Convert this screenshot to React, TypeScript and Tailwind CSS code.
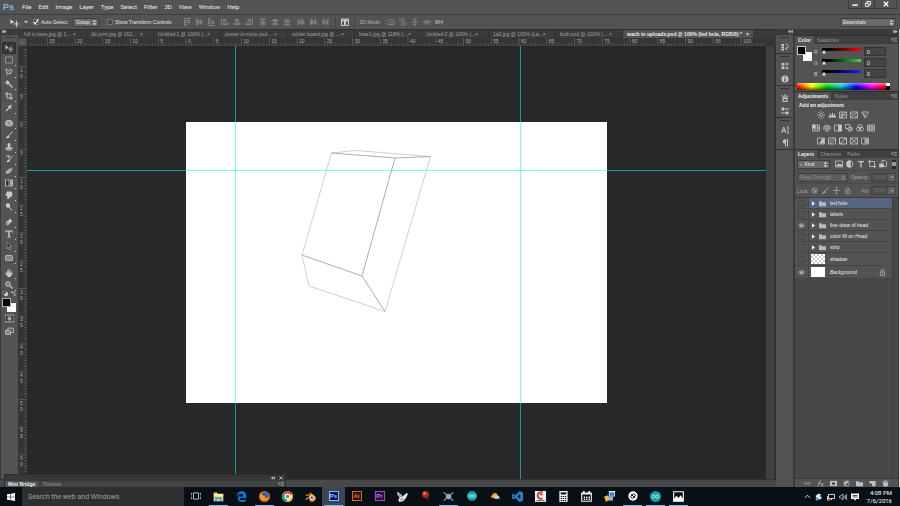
import type { ReactNode } from 'react';
import clsx from 'clsx';

type IconProps = { children: ReactNode; className?: string };

// All icons share a 16 unit grid and take their colour from the text
function Icon({ children, className = 'size-2' }: IconProps) {
  return (
    <svg viewBox="0 0 16 16" className={clsx('shrink-0', className)} fill="none" stroke="currentColor" strokeWidth="1.6" aria-hidden="true">
      {children}
    </svg>
  );
}

const MENU = ['File', 'Edit', 'Image', 'Layer', 'Type', 'Select', 'Filter', '3D', 'View', 'Window', 'Help'];

const DOCUMENTS = [
  'full in boss.jpg @ 1...',
  '3d print.jpg @ 162...',
  'Untitled-1 @ 100% (...',
  'poster to micle.psd ...',
  'solder board.jpg @ ...',
  'boar1.jpg @ 118% (...',
  'Untitled-2 @ 100% (...',
  '1a2.jpg @ 100% (La...',
  'both.psd @ 100% (...',
];

const moveIcon = (
  <>
    <path d="M1 2v9l3-2.500h4z" fill="currentColor" stroke="none" />
    <path d="M11.500 6v9M7 10.500h9" />
    <path d="M11.500 4.500l1.500 2h-3zM11.500 16l1.500-2h-3z" fill="currentColor" stroke="none" />
  </>
);

const TOOL_GROUPS: { name: string; icon: ReactNode; single?: boolean }[][] = [
  [
    { name: 'Move', icon: moveIcon, single: true },
    { name: 'Marquee', icon: <rect x="1" y="2" width="14" height="12" strokeDasharray="2.500 1.500" /> },
    { name: 'Lasso', icon: <path d="M2 2l2 8 6 2 4-5-2-5-5 3zM4 10l-1 5M8 6l4 6" /> },
    { name: 'Magic wand', icon: <><path d="M6 6l9 9" strokeWidth="2.500" /><path d="M5 0v10M0 5h10M2 2l6 6M8 2L2 8" /></> },
    { name: 'Crop', icon: <path d="M4 0v12h12M0 4h12v12" strokeWidth="2" /> },
    { name: 'Eyedropper', icon: <><path d="M2 14l7-7" strokeWidth="2.500" /><path d="M7 4l5 5M9 6l4-4" strokeWidth="3.500" /></> },
  ],
  [
    { name: 'Healing brush', icon: <><rect x="1" y="3" width="14" height="11" rx="5" fill="#a8a8a8" /><path d="M6 6h4M6 8.500h4M6 11h4" stroke="#888" /></> },
    { name: 'Brush', icon: <><path d="M15 1L7 10" strokeWidth="2" /><path d="M7 9c-3 0-3 4-6 4 2 2 8 2 8-2z" fill="currentColor" stroke="none" /></> },
    { name: 'Clone stamp', icon: <path d="M5 3a3 3 0 016 0l-1 6h5v3H1V9h5zM2 13h12v2H2z" fill="currentColor" stroke="none" /> },
    { name: 'History brush', icon: <><path d="M15 2L8 10M2 2h8L6 6" strokeWidth="2" /><path d="M8 9c-3 0-3 4-6 4 2 2 8 2 8-2z" fill="currentColor" stroke="none" /></> },
    { name: 'Eraser', icon: <><path d="M9 3h6l-2 5-6 5H1l2-5z" fill="currentColor" stroke="none" /><path d="M3 8h5l6-5" stroke="#777" /></> },
    { name: 'Gradient', icon: <><rect x="1" y="2" width="14" height="12" fill="#666" /><path d="M2 3h4v10H2z" fill="#333" stroke="none" /><path d="M10 3h4v10h-4z" fill="#aaa" stroke="none" /></> },
    { name: 'Smudge', icon: <path d="M4 1h8l3 3-1 7-4 1-3 4H4l1-5-4-2z" fill="currentColor" stroke="none" /> },
    { name: 'Dodge', icon: <><circle cx="6" cy="5" r="4.500" fill="currentColor" stroke="none" /><path d="M8 8l6 7" strokeWidth="2" /></> },
  ],
  [
    { name: 'Pen', icon: <><path d="M9 1l6 5-3 2-4 5-7 2 2-8 5-3z" fill="currentColor" stroke="none" /><path d="M2 14l5-6" stroke="#555" /></> },
    { name: 'Type', icon: <path d="M1 1h14v4h-1.500L12 3H9.500v10l2 1v1h-7v-1l2-1V3H4L2.500 5H1z" fill="currentColor" stroke="none" /> },
    { name: 'Path selection', icon: <path d="M4 1v12l3-3 2 5 2-1-2-5h4z" fill="#222" strokeWidth="1" /> },
    { name: 'Rectangle', icon: <rect x="1" y="3" width="14" height="10" rx="2" fill="#888" /> },
  ],
  [
    { name: 'Hand', icon: <path d="M4 8V3h1.500v4h1V1H8v6h1V1h1.500v6h1V3H13v6l2-2 1 1-4 6-2 2H6L0 8l1-1z" fill="currentColor" stroke="none" /> },
    { name: 'Zoom', icon: <><circle cx="6" cy="6" r="4.500" strokeWidth="2" fill="#777" /><path d="M10 10l5 5" strokeWidth="2.500" /></> },
  ],
];

const folder = <path d="M0 3h6l1 2h9v9H0z" fill="currentColor" stroke="none" />;

const eye = (
  <>
    <path d="M1 8c3-5 11-5 14 0-3 5-11 5-14 0z" />
    <circle cx="8" cy="8" r="2" fill="currentColor" />
  </>
);

const lock = (
  <>
    <path d="M3 7h10v8H3z" />
    <path d="M5 7V4a3 3 0 016 0v3M8 9v4" />
  </>
);

const ALIGN_GROUPS = [
  [
    <path d="M1 1h14M3 4h3v11H3zM10 4h3v6h-3z" />,
    <path d="M1 8h14M3 2h3v12H3zM10 4h3v8h-3z" />,
    <path d="M1 15h14M3 1h3v11H3zM10 6h3v6h-3z" />,
  ],
  [
    <path d="M1 1v14M4 3h6v3H4zM4 10h11v3H4z" />,
    <path d="M8 1v14M5 3h6v3H5zM2 10h12v3H2z" />,
    <path d="M15 1v14M6 3h6v3H6zM1 10h11v3H1z" />,
  ],
  [
    <path d="M1 2h14M1 9h14M5 4h6v2H5zM5 11h6v3H5z" />,
    <path d="M1 5h14M1 12h14M5 3h6v4H5zM5 10h6v4H5z" />,
    <path d="M1 7h14M1 14h14M5 3h6v3H5zM5 10h6v3H5z" />,
  ],
  [
    <path d="M2 1v14M9 1v14M4 5h2v6H4zM11 5h3v6h-3z" />,
    <path d="M5 1v14M12 1v14M3 5h4v6H3zM10 5h4v6h-4z" />,
    <path d="M7 1v14M14 1v14M3 5h3v6H3zM10 5h3v6h-3z" />,
  ],
];

const MODE_ICONS = [
  <path d="M2 12a6 4 0 018-8l4 1v8H6l-4-1M6 9h5" />,
  <><circle cx="8" cy="8" r="3" /><path d="M3 3a7 7 0 0110 0M13 13a7 7 0 01-10 0M2 2v4M14 14v-4" /></>,
  <path d="M8 1v14M1 8h14M5 4l3-3 3 3M5 12l3 3 3-3" />,
  <path d="M8 2v12M1 8h14M4 5L1 8l3 3M12 5l3 3-3 3" strokeWidth="2" />,
  <path d="M0 5h9v6H0zM10 8l5-4v8z" fill="currentColor" />,
];

const DOCK_GROUPS = [
  [{ name: 'History', icon: <><path d="M1 2h5v4H1zM1 7h5v4H1zM1 12h5v3H1z" fill="currentColor" stroke="none" /><path d="M9 2c7 0 7 9 1 9M12 8l-3 3 3 3" /></> }],
  [
    { name: 'Brush presets', icon: <><path d="M1 2h6v5H1zM1 9h6v5H1z" fill="currentColor" stroke="none" /><path d="M9 4h6M9 12h6M12 1v6M12 9v6" strokeWidth="2" /></> },
    { name: 'Info', icon: <><circle cx="8" cy="8" r="7" fill="currentColor" stroke="none" /><path d="M8 3v2M8 7v6" stroke="#444" strokeWidth="2.500" /></> },
  ],
  [
    { name: 'Brushes', icon: <path d="M4 9h8v6H4zM6 9L2 2M8 9V0M10 9l4-6" strokeWidth="2.200" /> },
    { name: 'Tool presets', icon: <><path d="M0 4h16M0 12h16" strokeWidth="2" /><path d="M2 1h4v6H2zM10 9h4v6h-4z" fill="currentColor" stroke="none" /></> },
  ],
  [
    { name: 'Character', icon: <path d="M1 14L5.500 2 10 14M2.500 10h6M14 0v16" strokeWidth="2" /> },
    { name: 'Paragraph', icon: <path d="M7 1h7v14h-2V3h-2v12H8V9a4 4 0 01-1-8z" fill="currentColor" stroke="none" /> },
  ],
];

const ADJUSTMENTS = [
  [
    <><circle cx="8" cy="8" r="3" /><path d="M8 0v3M8 13v3M0 8h3M13 8h3M2 2l2 2M12 12l2 2M14 2l-2 2M4 12l-2 2" /></>,
    <path d="M0 13h16v-3h-2V6h-2v3h-2V4H8v5H6V5H4v4H2v2H0z" fill="currentColor" stroke="none" />,
    <path d="M1 2h14v12H1zM1 14C9 13 8 3 15 2M6 2v12M1 8h14" />,
    <path d="M1 2h14v12H1zM2 13L14 3M3 6h4M10 11h4" />,
    <path d="M1 2h14L8 14zM5 4l3 7" />,
  ],
  [
    <><path d="M1 2h14v12H1zM1 8h14M6 2v12M11 2v12" /><path d="M1 2h5v6H1z" fill="currentColor" /></>,
    <path d="M8 1v13M4 14h8M2 4h12M3 4l-3 6h6zM13 4l-3 6h6z" />,
    <><path d="M1 2h14v12H1z" /><path d="M9 2h6v12H9z" fill="currentColor" /></>,
    <><path d="M1 1h9v8H1z" /><circle cx="10" cy="10" r="4.500" fill="#888" /></>,
    <><circle cx="8" cy="5" r="4" /><circle cx="5" cy="10" r="4" /><circle cx="11" cy="10" r="4" /></>,
    <path d="M1 2h14v12H1zM1 6h14M1 10h14M5 2v12M10 2v12" />,
  ],
  [
    <><path d="M1 2h14v12H1z" /><path d="M10 3L5 13h9V3z" fill="currentColor" stroke="none" /></>,
    <path d="M1 2h14v12H1zM1 11L12 2M4 14L15 5" />,
    <path d="M1 2h14v12H1zM1 13c7 0 7-10 14-10" strokeWidth="2" />,
    <path d="M1 2h14v12H1zM1 2l7 6 7-6M1 14l7-6 7 6" />,
    <><path d="M1 2h14v12H1z" /><path d="M7 3h7v10H7z" fill="#aaa" stroke="none" /></>,
  ],
];

const FILTER_ICONS = [
  <><path d="M1 2h14v12H1z" /><path d="M3 12l4-5 3 3 2-2 2 4z" fill="currentColor" /></>,
  <><circle cx="8" cy="8" r="6" /><path d="M8 2v12A6 6 0 018 2z" fill="currentColor" strokeWidth="3" /></>,
  <path d="M2 3h12M8 3v12" strokeWidth="2.500" />,
  <path d="M3 3h10v10H3zM0 3h6M3 0v6M10 13h6M13 10v6" />,
  <><path d="M6 1h6l3 3v9H6z" /><path d="M1 8h8v6H1z" fill="currentColor" /></>,
];

const LOCK_ICONS = [
  <><circle cx="8" cy="8" r="6" /><path d="M4 4h4v4H4zM8 8h4v4H8z" fill="currentColor" stroke="none" /></>,
  <><path d="M15 1L6 11" strokeWidth="2" /><path d="M6 9l-5 6 7-3z" fill="currentColor" /></>,
  <path d="M8 0v16M0 8h16M6 2l2-2 2 2M6 14l2 2 2-2" />,
  lock,
];

const FOOTER_ICONS = [
  <path d="M1 6h6v4H1zM9 6h6v4H9zM5 8h6" opacity="0.5" />,
  <path d="M1 15c4 0 3-14 8-13M3 7h5M9 7l6 7M15 7l-6 7" strokeWidth="1.800" />,
  <><path d="M0 2h16v12H0z" fill="currentColor" stroke="none" /><circle cx="8" cy="8" r="3.500" fill="#444" stroke="none" /></>,
  <><circle cx="8" cy="8" r="6" /><path d="M4 12A6 6 0 0112 4z" fill="currentColor" /></>,
  folder,
  <path d="M1 2h14v12H7V8H1z" fill="currentColor" stroke="none" />,
  <><path d="M2 5h12l-1 10H3z" fill="currentColor" stroke="none" /><path d="M1 3h14M6 1h4" /></>,
];

const LAYERS = [
  { name: 'led hole', kind: 'group', visible: false, selected: true },
  { name: 'labels', kind: 'group', visible: false },
  { name: 'line draw of head', kind: 'group', visible: true },
  { name: 'color fill on Head', kind: 'group', visible: false },
  { name: 'strip', kind: 'group', visible: false },
  { name: 'shadow', kind: 'transparent', visible: false },
  { name: 'Background', kind: 'background', visible: true },
];

const badge = (text: string, edge: string, fill: string, ink: string) => (
  <span className={clsx('flex size-[10px] items-center justify-center border text-[6px] leading-none font-bold', edge, fill, ink)}>{text}</span>
);

const arduino = (
  <>
    <circle cx="8" cy="8" r="8" fill="#0ea0a5" stroke="none" />
    <circle cx="5.300" cy="8" r="2.300" stroke="#c9f3f2" strokeWidth="1.300" />
    <circle cx="10.700" cy="8" r="2.300" stroke="#c9f3f2" strokeWidth="1.300" />
  </>
);

const TASKS: { name: string; icon: ReactNode; open?: boolean; active?: boolean }[] = [
  { name: 'Task View', icon: <Icon className="size-[10px] text-gray-200"><path d="M4 3h8v10H4zM2 4H0v8h2M14 4h2v8h-2" strokeWidth="1.200" /></Icon> },
  { name: 'File Explorer', open: true, icon: <Icon className="size-[11px]"><path d="M1 2h5l1 2h8v11H1z" fill="#f7d774" stroke="none" /><path d="M1 5h14v2H1z" fill="#fff0b8" stroke="none" /><path d="M3 9h10v6h-3v-3H6v3H3z" fill="#38a9e0" stroke="none" /></Icon> },
  { name: 'Edge', icon: <Icon className="size-[11px]"><path d="M1 8C2-2 15-2 15 8v2H5c0 4 5 4 9 2v3C8 18 1 15 3 9c1-2 2-3 4-4-1 1-2 2-2 3h6C11 2 4 3 1 8z" fill="#0a7de0" stroke="none" /></Icon> },
  { name: 'Firefox', open: true, icon: <Icon className="size-[11px]"><circle cx="8" cy="8" r="8" fill="#e8641b" stroke="none" /><circle cx="9" cy="6.500" r="5" fill="#2b65b5" stroke="none" /><path d="M1 4c3 0 4 3 8 4-1 3 3 3 5 0 0 6-8 8-12 3z" fill="#f59a23" stroke="none" /></Icon> },
  { name: 'Chrome', icon: <Icon className="size-[11px]"><circle cx="8" cy="8" r="8" fill="#f9d23c" stroke="none" /><path d="M8 8L1 4a8 8 0 0114 0z" fill="#dc4437" stroke="none" /><path d="M8 8L1 4a8 8 0 006 12z" fill="#1ea362" stroke="none" /><circle cx="8" cy="8" r="3.500" fill="#4a8af4" stroke="#fff" /></Icon> },
  { name: 'Blender', icon: <Icon className="size-[11px]"><path d="M0 12l7-5H1V5h7L6 3l2-1 7 6a5 5 0 01-9 5L7 9l-5 4z" fill="#ee8211" stroke="none" /><circle cx="10" cy="9.500" r="3.500" fill="#fff" stroke="none" /><circle cx="10" cy="9.500" r="2" fill="#235a95" stroke="none" /></Icon> },
  { name: 'Photoshop', open: true, active: true, icon: badge('Ps', 'border-[#8fb8ee]', 'bg-[#0c1463]', 'text-[#9ec8ff]') },
  { name: 'Illustrator', icon: badge('Ai', 'border-[#d9671c]', 'bg-[#26150a]', 'text-[#e8742a]') },
  { name: 'Premiere', icon: badge('Pr', 'border-[#9a4bc4]', 'bg-[#2a0a3c]', 'text-[#c77cf0]') },
  { name: 'Inkscape', icon: <Icon className="size-[11px]"><path d="M0 1l6 4 2 3 6-5 2 1-3 6-4 5-6 1-1-4 2-3-3-3z" fill="#e8e8e8" stroke="none" /><path d="M2 5l5 4M5 13l4-2" stroke="#777" /></Icon> },
  { name: 'Joystick', icon: <Icon className="size-[11px]"><circle cx="8" cy="5" r="5" fill="#b3261a" stroke="none" /><circle cx="6.500" cy="3.500" r="2" fill="#f08060" stroke="none" /><path d="M10 9l2 4" stroke="#6b2a22" /></Icon> },
  { name: 'XMind', open: true, icon: <Icon className="size-[11px] text-gray-400"><path d="M1 2l14 12M15 2L1 14" strokeWidth="1.800" /><circle cx="8" cy="8" r="4" fill="#8fa9bd" stroke="none" /></Icon> },
  { name: 'Arduino', icon: <Icon className="size-[10px]">{arduino}</Icon> },
  { name: 'Fritzing', icon: <Icon className="size-[10px]"><path d="M1 10l4-6 5-1 5 7-4 3z" fill="#e3a52c" stroke="none" /><path d="M6 7l8 1 2 4H8z" fill="#c9d2d8" stroke="none" /></Icon> },
  { name: 'Visual Studio Code', icon: <Icon className="size-[11px]"><path d="M11 0l5 2v12l-5 2-6-6-3 2-2-1V5l2-1 3 2z" fill="#2383cf" stroke="none" /><path d="M12 4.500v7L7.500 8zM1.500 6v4l2-2z" fill="#0b141c" stroke="none" /></Icon> },
  { name: 'SolidWorks', icon: <Icon className="size-[11px]"><path d="M0 0h16v16H0z" fill="#f4f4f4" stroke="none" /><path d="M11 2a5 5 0 100 9M7 5h4" stroke="#d8262c" strokeWidth="2.500" /><path d="M2 14h12" stroke="#777" strokeWidth="2" /></Icon> },
  { name: 'Calculator', icon: <Icon className="size-[11px]"><path d="M2 0h12v16H2z" fill="#f2f2f2" stroke="none" /><path d="M4 3.500h8" stroke="#111" strokeWidth="3" /><path d="M4 8h8M4 11h8M4 14h8" stroke="#111" strokeDasharray="2 1" /></Icon> },
  { name: 'Calendar', icon: <Icon className="size-[11px] text-gray-100"><path d="M1 3h14v12H1z" /><path d="M1 4h14M4 0v4M12 0v4" strokeWidth="2.500" /><path d="M4 9h9M4 12h9" strokeWidth="2" strokeDasharray="2 1.500" /></Icon> },
  { name: 'Remote', icon: <Icon className="size-[11px]"><path d="M7 0h9v8H7z" fill="#e4eefb" stroke="none" /><path d="M8 2h7v5H8z" fill="#3a7bd5" stroke="none" /><path d="M5 8h8v6H5z" fill="#8fb6e8" stroke="none" /><path d="M0 8l6-2 2 6-5 4z" fill="#f0b62f" stroke="none" /></Icon> },
  { name: 'Unity', open: true, icon: <Icon className="size-[10px]"><circle cx="8" cy="8" r="7.500" fill="#fff" stroke="none" /><path d="M5 5l6 6M4 9l5-5 3 3-5 5z" stroke="#111" /></Icon> },
  { name: 'Arduino sketch', open: true, icon: <Icon className="size-[11px]">{arduino}</Icon> },
  { name: 'Photos', open: true, icon: <Icon className="size-[11px]"><path d="M1 1h14v14H1z" stroke="#fff" /><path d="M1 15v-3l4-5 3 3 3-4 4 6v3z" fill="#fff" stroke="none" /></Icon> },
];

const updown = <path d="M4 6.500L8 2l4 4.500zM4 9.500L8 14l4-4.500z" fill="currentColor" stroke="none" />;

function Select({ label, value, className, dim }: { label: string; value: string; className: string; dim?: boolean }) {
  return (
    <div className={clsx('relative h-[9px] rounded-[1px] border border-[#3e3e3e]', dim ? 'bg-[#5c5c5c] text-[#8c8c8c]' : 'bg-[#696969] text-[#eee]', className)}>
      <select aria-label={label} className="block h-[7px] w-full appearance-none px-[2px] leading-[7px] outline-none">
        <option>{value}</option>
      </select>
      <Icon className="pointer-events-none absolute top-0 right-0 size-[7px]">{updown}</Icon>
    </div>
  );
}

function Check({ label, checked }: { label: string; checked?: boolean }) {
  return (
    <label className="flex items-center gap-[2px]">
      <span className="relative flex size-[6px]">
        <input type="checkbox" defaultChecked={checked} className="peer size-[6px] appearance-none border border-[#777] bg-[#484848]" />
        <Icon className="pointer-events-none absolute inset-0 hidden size-[6px] text-white peer-checked:block">
          <path d="M2 8l4 5 8-12" strokeWidth="3" />
        </Icon>
      </span>
      {label}
    </label>
  );
}

function OptionsBar() {
  return (
    <div className="flex h-[15px] shrink-0 items-center border-t border-[#3d3d3d] bg-[#535353] pr-1 text-[#e4e4e4]">
      <div className="flex w-[33px] items-center gap-[5px] pl-[10px]">
        <Icon className="size-[9px]">{moveIcon}</Icon>
        <Icon className="size-1"><path d="M2 5h12l-6 7z" fill="currentColor" /></Icon>
      </div>
      <div className="w-[40px]"><Check label="Auto-Select:" checked /></div>
      <Select label="Auto-select target" value="Group" className="mr-2 w-[26px]" />
      <Check label="Show Transform Controls" />
      <div className="ml-3 flex gap-[6px] text-[#8a8a8a]">
        {ALIGN_GROUPS.map((group, i) => (
          <div key={i} className="flex gap-1">
            {group.map((icon, j) => (
              <button key={j} aria-label="Align layers" className="size-2"><Icon>{icon}</Icon></button>
            ))}
          </div>
        ))}
      </div>
      <div className="ml-[6px] flex h-[11px] items-center border-x border-[#434343] px-[5px]">
        <button aria-label="Auto-align" className="text-[#ccc]">
          <Icon><path d="M1 2h6v13H1zM9 2h6v13H9zM1 6h14M3 2v4M12 2v4" strokeWidth="2" /></Icon>
        </button>
      </div>
      <span className="ml-1 w-[28px] text-[#b0b0b0]">3D Mode:</span>
      <div className="flex gap-1 text-[#8a8a8a]">
        {MODE_ICONS.map((icon, i) => (
          <button key={i} aria-label="3D mode" className="size-2"><Icon>{icon}</Icon></button>
        ))}
      </div>
      <Select label="Workspace" value="Essentials" className="ml-auto w-[56px]" />
    </div>
  );
}

function Toolbox() {
  return (
    <aside className="w-[18px] shrink-0 border-l border-[#3a3a3a] bg-[#535353]">
      <div className="h-[6px] bg-[#3a3a3a] text-[#bbb]">
        <Icon className="ml-[1px] size-[5px]"><path d="M1 3l6 5-6 5zM8 3l6 5-6 5z" fill="currentColor" /></Icon>
      </div>
      <div className="mx-1 mt-[2px] mb-1 border-t border-[#3a3a3a]" />
      <div className="flex flex-col gap-[3px] px-[1px]">
        {TOOL_GROUPS.map((group, i) => (
          <div key={i} className="flex flex-col">
            {group.map((tool) => (
              <button
                key={tool.name}
                aria-label={tool.name}
                className={clsx('relative flex h-3 w-[14px] items-center justify-center text-[#c9c9c9]', tool.name === 'Move' && 'rounded-[1px] border border-[#2b2b2b] bg-[#383838]')}
              >
                <Icon>{tool.icon}</Icon>
                {!tool.single && <span className="absolute right-0 bottom-0 size-px bg-[#d0d0d0]" />}
              </button>
            ))}
          </div>
        ))}
      </div>
      <div className="flex justify-between px-[2px] text-[#ddd]">
        <Icon className="size-[5px]"><path d="M5 5h10v10H5z" fill="currentColor" /><path d="M1 1h8v8H1z" fill="#111" /></Icon>
        <Icon className="size-[5px]"><path d="M2 4h10v10M5 0L1 4l4 4M8 11l4 4 4-4" strokeWidth="2" /></Icon>
      </div>
      <div className="relative mx-[1px] mt-[2px] h-[14px]">
        <button aria-label="Background color" className="absolute right-[1px] bottom-0 size-[9px] bg-white" />
        <button aria-label="Foreground color" className="absolute top-0 left-0 size-[9px] border border-[#aaa] bg-black" />
      </div>
      <div className="mt-[2px] flex flex-col items-center gap-1 text-[#bdbdbd]">
        <button aria-label="Quick mask"><Icon className="size-[9px]"><path d="M0 2h16v12H0z" fill="#333" /><circle cx="8" cy="8" r="3" fill="#999" /></Icon></button>
        <button aria-label="Screen mode"><Icon className="size-[9px]"><path d="M5 2h10v8H5z" /><path d="M1 6h9v7H1z" fill="#888" /></Icon></button>
      </div>
    </aside>
  );
}

// One unit is 5.55px, the origin is the corner of the artboard
const UNIT = 5.55;

function Ruler({ vertical, origin, from, to }: { vertical?: boolean; origin: number; from: number; to: number }) {
  const ticks: ReactNode[] = [];
  for (let n = from * 2; n <= to * 2; n++) {
    const pos = origin + (n * UNIT) / 2;
    const unit = n / 2;
    const major = unit % 5 === 0;
    const size = major ? 8 : n % 2 === 0 ? 3 : 2;
    const digits = String(Math.abs(unit));
    ticks.push(
      vertical ? (
        <g key={n}>
          <path d={`M${9 - size} ${pos}H9`} />
          {major && digits.split('').map((d, i) => (
            <text key={i} x="2" y={pos + 5 + i * 6} fill="#aaa" stroke="none">{d}</text>
          ))}
        </g>
      ) : (
        <g key={n}>
          <path d={`M${pos} ${8 - size}V8`} />
          {major && <text x={pos + 2} y="5" fill="#aaa" stroke="none">{digits}</text>}
        </g>
      )
    );
  }
  return (
    <svg className={clsx('shrink-0 bg-[#353535] text-[5px]', vertical ? 'h-full w-[9px]' : 'h-2 w-full')} stroke="#6e6e6e" strokeWidth="0.6">
      {ticks}
    </svg>
  );
}

function Artboard() {
  return (
    <div className="relative h-[281px] w-[421px] shrink-0 bg-white">
      <svg viewBox="0 0 421 281" className="size-full" fill="none" stroke="#c4c4c4" strokeWidth="0.8">
        <path d="M145.500 31L116 133l7 31 76 25.500L244.500 34.500 170 28.500 145.500 31" />
        <path d="M145.500 31l63.500 5 35.500-1.500M209 36l-33 118 23 35.500M116 133l60 21" stroke="#979797" />
      </svg>
      <span className="absolute -inset-y-[600px] left-[49px] w-px bg-[#00ffff]/55" />
      <span className="absolute -inset-y-[600px] left-[334px] w-px bg-[#00ffff]/55" />
      <span className="absolute -inset-x-[1000px] top-12 h-px bg-[#00ffff]/55" />
    </div>
  );
}

function DocumentArea() {
  return (
    <section className="flex min-w-0 flex-1 flex-col bg-[#3a3a3a]">
      <div className="flex h-[9px] shrink-0 overflow-hidden border-t border-[#303030] pl-[2px] leading-[9px] whitespace-nowrap text-[#a3a3a3]">
        {DOCUMENTS.map((name) => (
          <button key={name} className="flex w-[67px] shrink-0 justify-between border-r border-[#303030] pr-[10px] pl-1">
            <span>{name}</span>
            <span>×</span>
          </button>
        ))}
        <button className="flex gap-1 bg-[#535353] px-1 font-bold text-[#eee]">
          <span>wach to uploadx.psd @ 100% (led hole, RGB/8) *</span>
          <span>×</span>
        </button>
      </div>
      <div className="flex h-2 shrink-0 pr-[10px]">
        <span className="w-[9px] shrink-0 border border-[#454545] bg-[#5a5a5a]" />
        <Ruler origin={159} from={-28} to={104} />
      </div>
      <div className="flex min-h-0 flex-1">
        <Ruler vertical origin={76} from={-13} to={63} />
        <div className="flex min-w-0 flex-1 items-center justify-center overflow-hidden bg-[#282828]">
          <Artboard />
        </div>
        <div className="w-[10px] shrink-0 border-r-2 border-[#303030] bg-[#414141]" />
      </div>
    </section>
  );
}

function MiniBridge() {
  return (
    <div className="absolute bottom-0 left-1 w-[282px] border border-b-0 border-[#2c2c2c] bg-[#434343] text-[#999]">
      <div className="flex h-[6px] items-center justify-end gap-1 bg-[#383838] pr-[2px] text-[#ccc]">
        <Icon className="size-1"><path d="M7 3L1 8l6 5zM15 3L9 8l6 5z" fill="currentColor" /></Icon>
        <Icon className="size-1"><path d="M2 2l12 12M14 2L2 14" strokeWidth="3" /></Icon>
      </div>
      <div className="flex h-[6px] leading-[6px]">
        <button className="bg-[#535353] px-[3px] font-bold text-[#eee]">Mini Bridge</button>
        <button className="px-1">Timeline</button>
        <PanelMenu />
      </div>
    </div>
  );
}

function PanelMenu() {
  return (
    <button aria-label="Panel menu" className="mr-[1px] ml-auto text-[#aaa]">
      <Icon className="size-[6px]"><path d="M0 5h6l-3 5zM7 4h9M7 8h9M7 12h9" /></Icon>
    </button>
  );
}

function PanelTabs({ tabs }: { tabs: string[] }) {
  return (
    <div className="flex h-[9px] items-center border-t border-[#2e2e2e] bg-[#3f3f3f] leading-2 text-[#999]">
      {tabs.map((tab, i) => (
        <button key={tab} className={clsx('px-[3px]', i === 0 && 'bg-[#535353] font-bold text-[#eee]')}>{tab}</button>
      ))}
      <PanelMenu />
    </div>
  );
}

const CHANNELS = [
  { name: 'R', track: 'to-[#ff0000]' },
  { name: 'G', track: 'to-[#3fe03f]' },
  { name: 'B', track: 'to-[#2020ff]' },
];

function ColorPanel() {
  return (
    <section className="bg-[#535353]">
      <PanelTabs tabs={['Color', 'Swatches']} />
      <div className="flex px-[2px] pt-[2px]">
        <div className="relative size-[15px]">
          <button aria-label="Background color" className="absolute right-0 bottom-0 size-[9px] bg-white" />
          <button aria-label="Foreground color" className="absolute top-0 left-0 size-[9px] border border-[#ccc] bg-black" />
        </div>
        <div className="ml-[2px] flex flex-col">
          {CHANNELS.map(({ name, track }) => (
            <div key={name} className="flex h-[11px] items-center text-[#ccc]">
              <label htmlFor={`slider-${name}`} className="w-2">{name}</label>
              <input
                id={`slider-${name}`}
                type="range"
                min="0"
                max="255"
                defaultValue="0"
                className={clsx(
                  'mr-[3px] mb-1 h-[3px] w-[39px] appearance-none bg-linear-to-r from-black',
                  '[&::-webkit-slider-thumb]:mt-1 [&::-webkit-slider-thumb]:size-1 [&::-webkit-slider-thumb]:appearance-none [&::-webkit-slider-thumb]:bg-[#ddd] [&::-webkit-slider-thumb]:[clip-path:polygon(50%_0,100%_100%,0_100%)]',
                  track
                )}
              />
              <input aria-label={`${name} value`} defaultValue="0" className="h-[9px] w-[22px] border border-[#333] bg-[#454545] px-[2px] leading-[7px] text-[#eee]" />
            </div>
          ))}
        </div>
      </div>
      <div className="mt-1 flex h-[7px] pl-[2px]">
        <div className="flex w-[93px]">
          <div className="flex-1 bg-[linear-gradient(to_bottom,rgba(255,255,255,.5),transparent_50%,rgba(0,0,0,.6)),linear-gradient(to_right,#f00,#ff0,#0c0,#0cc,#00f,#f0f,#f00)]" />
          <div className="w-1 bg-linear-to-b from-white from-50% to-black to-50%" />
        </div>
      </div>
      <div className="h-px" />
    </section>
  );
}

function AdjustmentsPanel() {
  return (
    <section className="bg-[#535353]">
      <PanelTabs tabs={['Adjustments', 'Styles']} />
      <h2 className="px-1 pt-px font-bold text-[#f0f0f0]">Add an adjustment</h2>
      <div className="flex flex-col items-center gap-[5px] pt-[2px] pr-[7px] pb-1 text-[#c4c4c4]">
        {ADJUSTMENTS.map((row, i) => (
          <div key={i} className="flex gap-[3px]">
            {row.map((icon, j) => (
              <button key={j} aria-label="Add adjustment" className="size-2"><Icon>{icon}</Icon></button>
            ))}
          </div>
        ))}
      </div>
    </section>
  );
}

function Percent({ label }: { label: string }) {
  return (
    <label className="flex items-center gap-[2px] text-[#aaa]">
      {label}
      <span className="flex h-[9px] w-[25px] border border-[#404040] bg-[#4c4c4c]">
        <input defaultValue="100%" className="h-[7px] w-[16px] px-[2px] leading-[7px] text-[#737373]" />
        <span className="flex w-[7px] items-center justify-center bg-[#616161]">
          <Icon className="size-1"><path d="M2 5h12l-6 7z" fill="currentColor" stroke="none" /></Icon>
        </span>
      </span>
    </label>
  );
}

function LayersPanel() {
  return (
    <section className="flex min-h-0 flex-1 flex-col bg-[#535353]">
      <PanelTabs tabs={['Layers', 'Channels', 'Paths']} />
      <div className="flex h-3 items-center px-[2px] text-[#c4c4c4]">
        <Select label="Filter kind" value="⌕ Kind" className="mr-[5px] w-[33px]" />
        <div className="flex gap-[3px]">
          {FILTER_ICONS.map((icon, i) => (
            <button key={i} aria-label="Filter layers" className="size-2"><Icon>{icon}</Icon></button>
          ))}
        </div>
        <button aria-label="Toggle filter" className="ml-auto h-[9px] w-1 bg-[#2c2c2c]"><span className="block h-1 w-1 bg-[#999]" /></button>
      </div>
      <div className="flex h-[13px] items-center justify-between border-t border-[#484848] px-[2px]">
        <Select label="Blend mode" value="Pass Through" className="w-[51px]" dim />
        <Percent label="Opacity:" />
      </div>
      <div className="flex h-[14px] items-center border-t border-[#484848] px-[2px] text-[#aaa]">
        <span className="w-[14px]">Lock:</span>
        <div className="flex gap-[3px]">
          {LOCK_ICONS.map((icon, i) => (
            <button key={i} aria-label="Lock" className="size-2"><Icon className="size-[7px]">{icon}</Icon></button>
          ))}
        </div>
        <div className="ml-auto"><Percent label="Fill:" /></div>
      </div>
      <div className="flex min-h-0 flex-1 border-t border-[#3c3c3c] bg-[#474747] pr-[5px]">
        <ul className="flex-1 border-r border-[#3c3c3c]">
          {LAYERS.map((layer) => (
            <li
              key={layer.name}
              className={clsx('flex items-stretch border-b border-[#454545] bg-[#535353] text-[#eee]', layer.kind === 'group' ? 'h-[11px]' : 'h-[13px]')}
            >
              <button aria-label={`Visibility of ${layer.name}`} className="flex w-[14px] items-center justify-center border-r border-[#474747] text-[#ccc]">
                {layer.visible ? <Icon className="size-[7px]">{eye}</Icon> : <span className="size-[7px] border border-[#474747]" />}
              </button>
              <div className={clsx('flex flex-1 items-center pl-[2px]', layer.selected && 'bg-[#55657f]')}>
                <span className="flex w-[19px] items-center gap-[3px]">
                  {layer.kind === 'group' && (
                    <>
                      <Icon className="size-[5px]"><path d="M3 1l10 7-10 7z" fill="currentColor" stroke="none" /></Icon>
                      <Icon className="size-[7px] text-[#b8b8b8]">{folder}</Icon>
                    </>
                  )}
                  {layer.kind === 'transparent' && (
                    <span className="h-[10px] w-[14px] bg-white bg-[repeating-conic-gradient(#ccc_0_25%,#fff_0_50%)] bg-size-[4px_4px]" />
                  )}
                  {layer.kind === 'background' && <span className="h-[10px] w-[14px] bg-white" />}
                </span>
                <span className={clsx(layer.kind === 'background' && 'italic')}>{layer.name}</span>
                {layer.kind === 'background' && <Icon className="mr-[6px] ml-auto size-[7px] text-[#bbb]">{lock}</Icon>}
              </div>
            </li>
          ))}
        </ul>
      </div>
      <div className="flex h-[9px] shrink-0 items-center justify-center gap-[6px] border-t border-[#3c3c3c] text-[#c0c0c0]">
        {FOOTER_ICONS.map((icon, i) => (
          <button key={i} aria-label="Layer action"><Icon className="size-[7px]">{icon}</Icon></button>
        ))}
      </div>
    </section>
  );
}

function Dock() {
  return (
    <nav className="mr-[2px] w-[17px] shrink-0 bg-[#535353]">
      <div className="flex h-[6px] justify-end bg-[#3a3a3a] text-[#bbb]">
        <Icon className="size-[5px]"><path d="M7 3L1 8l6 5zM15 3L9 8l6 5z" fill="currentColor" /></Icon>
      </div>
      {DOCK_GROUPS.map((group, i) => (
        <div key={i} className="flex flex-col items-center gap-[5px] border-b border-[#333] py-[2px] text-[#c8c8c8]">
          <span className="w-[9px] border-t border-[#333]" />
          {group.map((item) => (
            <button key={item.name} aria-label={item.name} className="size-2"><Icon>{item.icon}</Icon></button>
          ))}
        </div>
      ))}
    </nav>
  );
}

function Taskbar() {
  return (
    <footer className="flex h-[19px] shrink-0 bg-[#080f15]">
      <button aria-label="Start" className="flex w-[22px] items-center justify-center text-white">
        <Icon><path d="M0 2.500l7-1v6H0zM8 1.300L16 0v7.500H8zM0 8.500h7v6l-7-1zM8 8.500h8V16l-8-1.300z" fill="currentColor" stroke="none" /></Icon>
      </button>
      <input
        aria-label="Search"
        placeholder="Search the web and Windows"
        className="w-[162px] bg-[#2d2f31] px-[6px] font-[Roboto,sans-serif] text-[7px] outline-none placeholder:text-[#a0a0a0]"
      />
      {TASKS.map((task) => (
        <button
          key={task.name}
          aria-label={task.name}
          className={clsx('flex w-[23px] items-center justify-center px-[2px]', task.active && 'bg-[#3b4650]')}
        >
          <span className={clsx('flex h-full w-full items-center justify-center border-b', task.open ? 'border-[#76b9ed]' : 'border-transparent')}>
            {task.icon}
          </span>
        </button>
      ))}
      <div className="ml-auto flex items-center gap-1 pr-2 text-white">
        <Icon className="size-[7px]"><path d="M2 11l6-6 6 6" strokeWidth="2" /></Icon>
        <Icon><path d="M7 1l5 2-2 4 4 1-3 5-5-1-4 2 1-5-2-3z" fill="#e8eef2" stroke="none" /><circle cx="4" cy="12" r="3" fill="#32b4e0" stroke="none" /></Icon>
        <Icon><path d="M3 3h12v8H3zM9 11v3M1 6v8h6" /></Icon>
        <Icon><path d="M1 6h3l4-4v12l-4-4H1zM10 6v4M12.500 4v8M15 2v12" strokeWidth="1.200" /></Icon>
        <Icon><path d="M0 1h16v11h-5l-4 4v-4H0z" fill="currentColor" stroke="none" /><path d="M3 5h10M3 8h10" stroke="#222" /></Icon>
        <time className="ml-1 text-right font-[Roboto,sans-serif] text-[6px] leading-2">
          4:08 PM
          <br />
          7/6/2016
        </time>
      </div>
    </footer>
  );
}

export default function App() {
  return (
    <div className="flex h-screen flex-col overflow-hidden bg-[#3a3a3a] font-['Liberation_Sans',Arial,sans-serif] text-[5px] leading-2">
      <header className="flex h-[14px] shrink-0 items-center bg-[#535353]">
        <span className="w-[22px] pl-[3px] text-[9px] font-bold text-[#7db4e6]">Ps</span>
        <nav className="flex gap-[7px] font-[Roboto,sans-serif] text-[6px] text-[#eee]">
          {MENU.map((item) => (
            <button key={item}>{item}</button>
          ))}
        </nav>
        <div className="mr-[3px] ml-auto flex h-[9px] self-start border border-t-0 border-[#3c3c3c] text-white">
          <button aria-label="Minimize" className="flex w-[13px] items-center justify-center border-r border-[#3c3c3c]"><Icon className="size-[6px]"><path d="M1 11h14" strokeWidth="4" /></Icon></button>
          <button aria-label="Restore" className="flex w-[13px] items-center justify-center border-r border-[#3c3c3c]"><Icon className="size-[6px]"><path d="M5 6V1h10v9h-4M1 6h9v8H1z" strokeWidth="2.500" /></Icon></button>
          <button aria-label="Close" className="flex w-[21px] items-center justify-center"><Icon className="size-[6px]"><path d="M2 2l12 12M14 2L2 14" strokeWidth="3.500" /></Icon></button>
        </div>
      </header>
      <OptionsBar />
      <main className="flex min-h-0 flex-1 border-r border-[#d8d8d8]">
        <div className="relative flex min-w-0 flex-1 flex-col">
          <div className="flex min-h-0 flex-1">
            <Toolbox />
            <DocumentArea />
          </div>
          <div className="h-2 shrink-0 border-t border-[#333] bg-[#484848]" />
          <MiniBridge />
        </div>
        <Dock />
        <div className="mr-px flex w-[103px] shrink-0 flex-col">
          <div className="flex h-[6px] shrink-0 justify-end bg-[#3a3a3a] text-[#bbb]">
            <Icon className="size-[5px]"><path d="M1 3l6 5-6 5zM8 3l6 5-6 5z" fill="currentColor" /></Icon>
          </div>
          <ColorPanel />
          <AdjustmentsPanel />
          <LayersPanel />
        </div>
      </main>
      <Taskbar />
    </div>
  );
}
